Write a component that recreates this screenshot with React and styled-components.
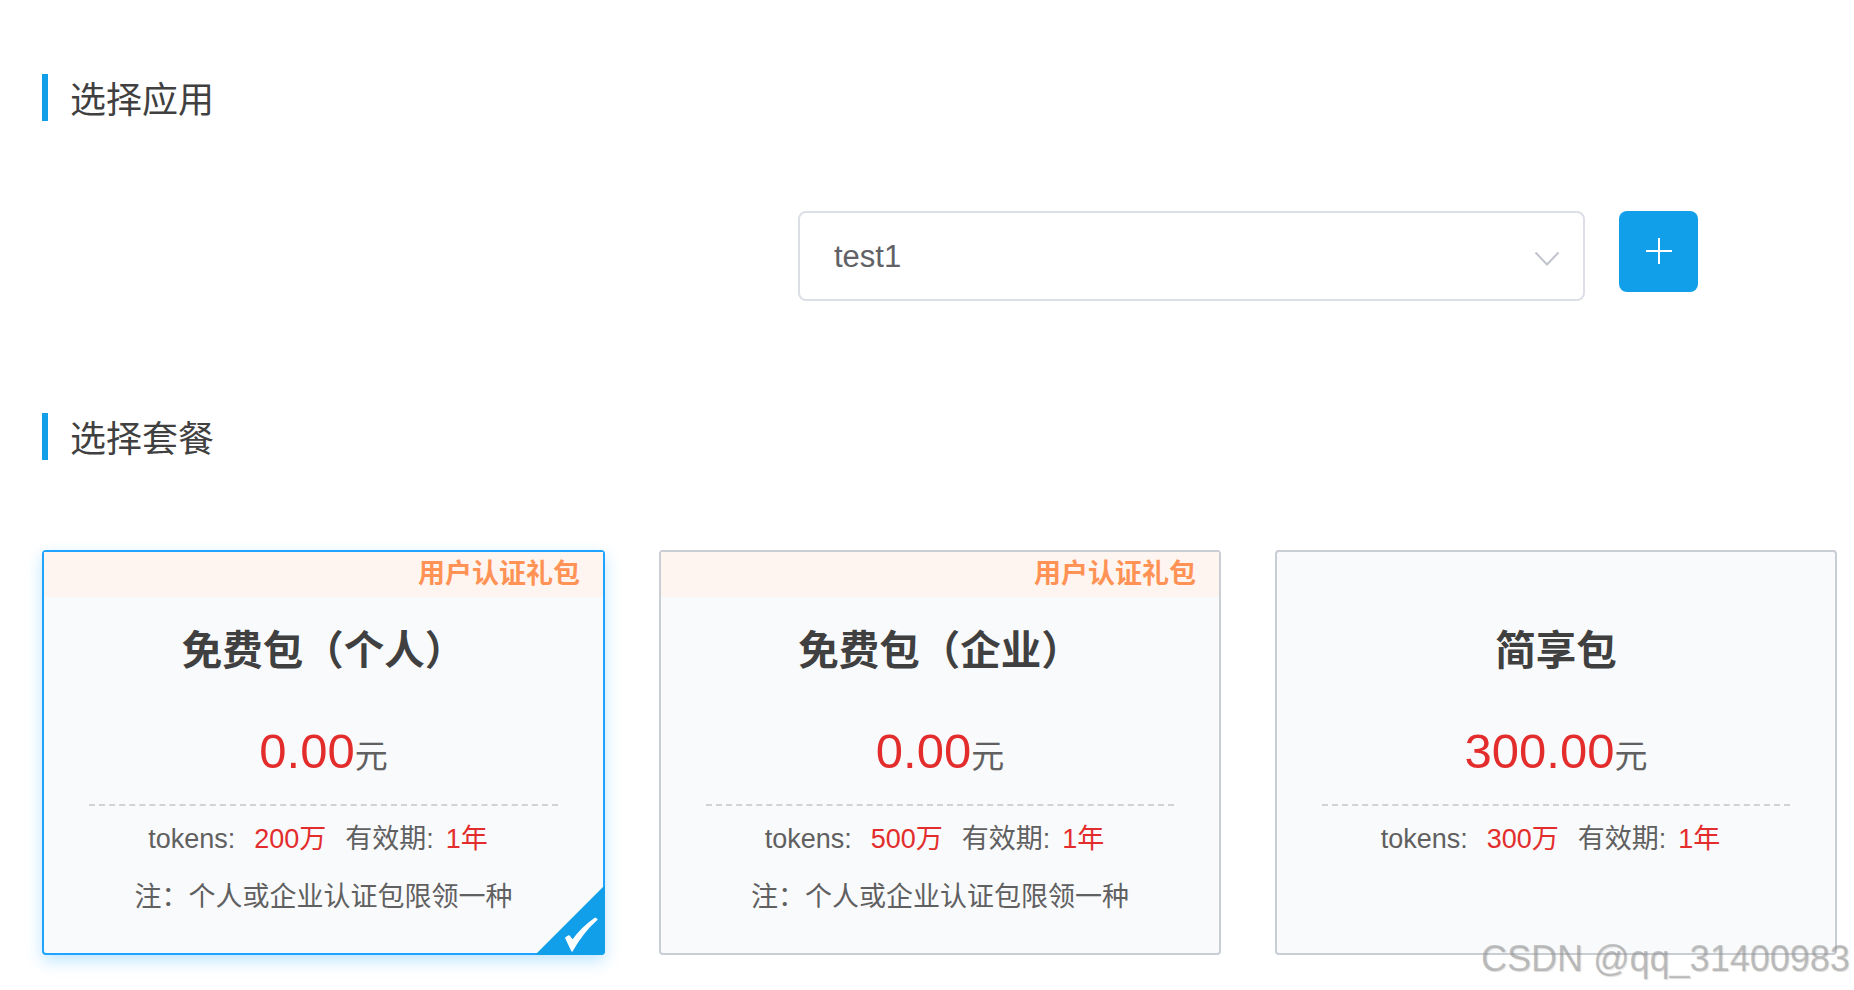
import React from 'react';
import styled, { createGlobalStyle } from 'styled-components';

const GlobalStyle = createGlobalStyle`
html, body {
  margin: 0;
  padding: 0;
  background: #fff;
}
body {
  font-family: "Liberation Sans", "Noto Sans CJK SC", sans-serif;
  color: #606060;
}
`;

const Page = styled.div`
  position: relative;
  box-sizing: border-box;
  width: 1854px;
  height: 990px;
  padding: 74px 0 0 42px;
  overflow: hidden;
`;

const SectionTitle = styled.h2`
  box-sizing: border-box;
  height: 47px;
  margin: 0;
  padding-left: 22px;
  border-left: 6px solid #129fea;
  font-size: 36px;
  font-weight: 400;
  line-height: 54px;
  color: #404040;
`;

const AppRow = styled.div`
  display: flex;
  align-items: flex-start;
  gap: 34px;
  margin: 90px 0 112px 756px;
`;

const Select = styled.div`
  box-sizing: border-box;
  display: flex;
  align-items: center;
  justify-content: space-between;
  width: 787px;
  height: 90px;
  padding: 2px 23px 0 34px;
  border: 2px solid #dcdfe6;
  border-radius: 8px;
  font-size: 31px;
  color: #606266;
`;

const Arrow = styled.svg`
  width: 26px;
  height: 15px;
  margin-top: 2px;
`;

const AddButton = styled.button`
  display: flex;
  align-items: center;
  justify-content: center;
  width: 79px;
  height: 81px;
  padding: 0 0 2px;
  border: none;
  border-radius: 8px;
  background: #129fea;
`;

const CardGrid = styled.div`
  display: grid;
  grid-template-columns: 563px 562px 562px;
  column-gap: 54px;
  margin-top: 90px;
`;

const Card = styled.div`
  position: relative;
  box-sizing: border-box;
  height: 405px;
  border: 2px solid ${p => (p.$active ? '#1ea4ff' : '#c9cdd4')};
  border-radius: 4px;
  background: #f9fafc;
  text-align: center;
  box-shadow: ${p => (p.$active ? '0 6px 16px rgba(30, 164, 255, 0.28)' : 'none')};
`;

const Ribbon = styled.div`
  box-sizing: border-box;
  height: 45px;
  padding-right: 23px;
  background: ${p => (p.$show ? '#fef5f0' : 'transparent')};
  color: #ff9254;
  font-size: 27px;
  font-weight: 700;
  line-height: 45px;
  text-align: right;
`;

const PlanName = styled.h3`
  margin: 24px 0 0;
  font-size: 40.5px;
  font-weight: 700;
  line-height: 60px;
  color: #404040;
`;

const PriceLine = styled.div`
  margin-top: 35px;
  font-size: 33px;
  line-height: 70px;
  color: #606060;
`;

const Price = styled.span`
  font-size: 49px;
  color: #e32d2d;
`;

const Divider = styled.div`
  margin: 12px 45px 0;
  border-top: 2px dashed #d2d2d2;
`;

const InfoLine = styled.div`
  margin-top: 13px;
  padding-right: 11px;
  font-size: 27px;
  line-height: 40px;
  white-space: nowrap;
`;

const Value = styled.span`
  margin: 0 ${p => p.$after}px 0 ${p => p.$before}px;
  color: #e32d2d;
`;

const NoteLine = styled.div`
  margin-top: 18px;
  font-size: 27px;
  line-height: 40px;
`;

const Corner = styled.svg`
  position: absolute;
  right: -2px;
  bottom: -2px;
  width: 70px;
  height: 70px;
`;

const Watermark = styled.div`
  position: absolute;
  left: 1481px;
  top: 938px;
  font-size: 36px;
  line-height: 42px;
  white-space: nowrap;
  color: rgba(150, 150, 150, 0.55);
  text-shadow: 1px 1px 1px rgba(120, 120, 120, 0.25);
`;

const plans = [
  { name: '免费包（个人）', price: '0.00', tokens: '200万', gift: true, active: true },
  { name: '免费包（企业）', price: '0.00', tokens: '500万', gift: true },
  { name: '简享包', price: '300.00', tokens: '300万' },
];

function PlanCard({ plan }) {
  return (
    <Card $active={plan.active}>
      <Ribbon $show={plan.gift}>{plan.gift && '用户认证礼包'}</Ribbon>
      <PlanName>{plan.name}</PlanName>
      <PriceLine>
        <Price>{plan.price}</Price>元
      </PriceLine>
      <Divider />
      <InfoLine>
        tokens:<Value $before={19} $after={19}>{plan.tokens}</Value>有效期:
        <Value $before={12} $after={0}>1年</Value>
      </InfoLine>
      {plan.gift && <NoteLine>注：个人或企业认证包限领一种</NoteLine>}
      {plan.active && (
        <Corner viewBox="0 0 68 68">
          <path d="M68 0V64a4 4 0 0 1-4 4H0Z" fill="#129fea" />
          <path
            d="M30 51.5 L36 64 Q46 46 60 33.5 L58.5 32.5 Q46 41 36.5 54 L33 49.5 Z"
            fill="#fff"
            stroke="#fff"
            strokeWidth="1.5"
            strokeLinejoin="round"
          />
        </Corner>
      )}
    </Card>
  );
}

export default function App() {
  return (
    <Page>
      <GlobalStyle />
      <SectionTitle>选择应用</SectionTitle>
      <AppRow>
        <Select>
          test1
          <Arrow viewBox="0 0 26 15">
            <path d="M1.5 1.5 L13 13.5 L24.5 1.5" fill="none" stroke="#c0c4cc" strokeWidth="2" />
          </Arrow>
        </Select>
        <AddButton aria-label="add">
          <svg width="28" height="28" viewBox="0 0 28 28">
            <path d="M14 1V27M1 14H27" fill="none" stroke="#fff" strokeWidth="2" />
          </svg>
        </AddButton>
      </AppRow>
      <SectionTitle>选择套餐</SectionTitle>
      <CardGrid>
        {plans.map(plan => (
          <PlanCard key={plan.name} plan={plan} />
        ))}
      </CardGrid>
      <Watermark>CSDN @qq_31400983</Watermark>
    </Page>
  );
}
